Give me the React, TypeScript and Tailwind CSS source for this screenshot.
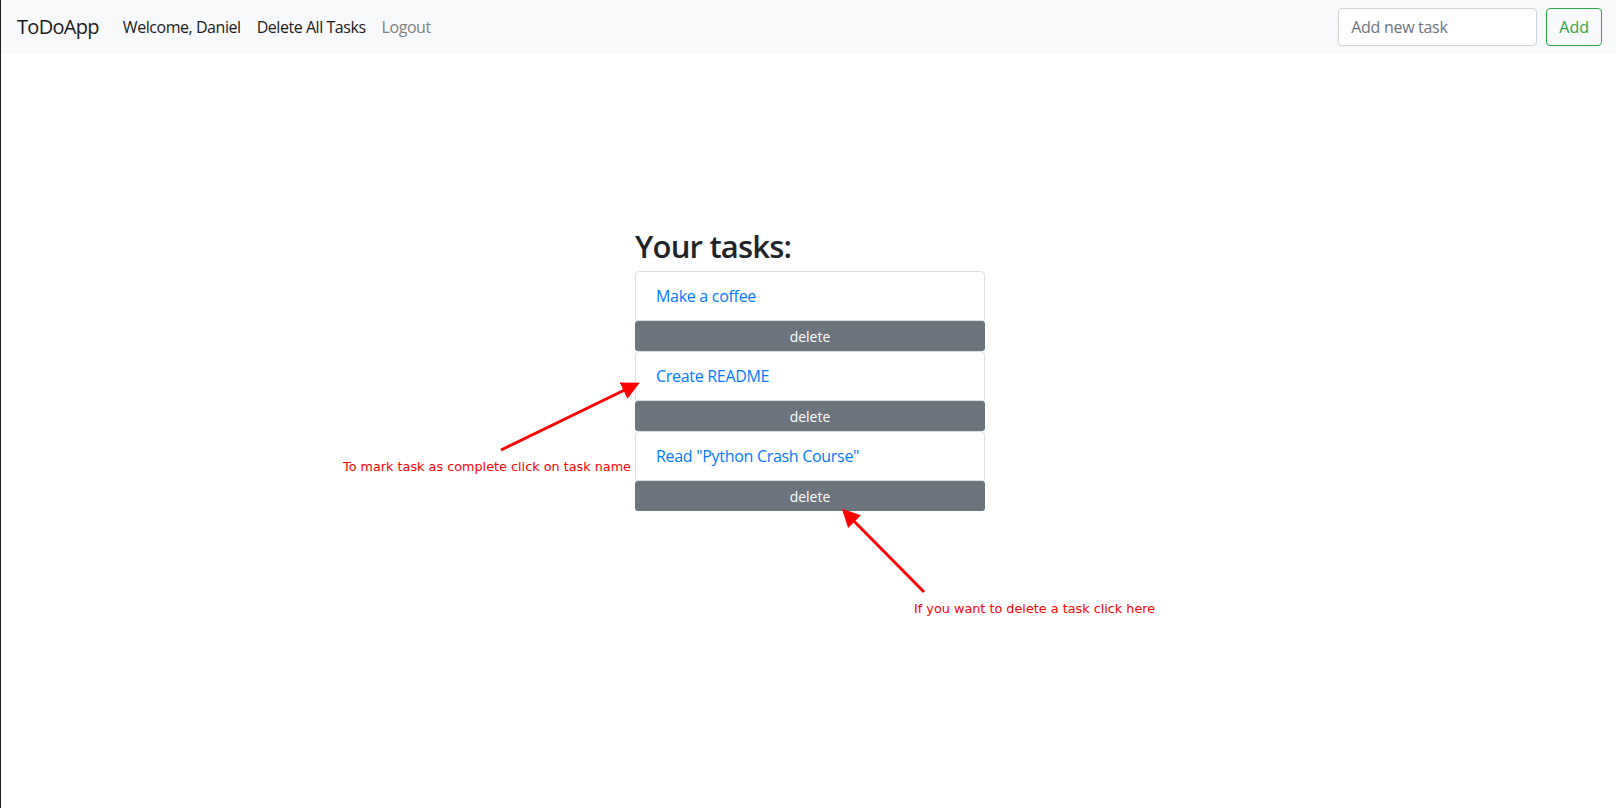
import React from "react";

const tasks = ["Make a coffee", "Create README", 'Read "Python Crash Course"'];

const Navbar = () => {
  return (
    <nav className="flex h-[54px] items-center justify-between bg-[#f8f9fa] pl-4 pr-[14px]">
      <div className="flex items-center tracking-[-0.45px]">
        <a className="mr-4 text-[20px] leading-[30px] tracking-[-0.7px] text-[#1a1a1a]" href="#">
          ToDoApp
        </a>
        <span className="px-2 text-[#1a1a1a]">Welcome, Daniel</span>
        <a className="px-2 text-[#1a1a1a]" href="#">
          Delete All Tasks
        </a>
        <a className="px-2 text-[#808080]" href="#">
          Logout
        </a>
      </div>
      <form className="flex items-center gap-[9px]" onSubmit={(e) => e.preventDefault()}>
        <input
          className="h-[38px] w-[199px] rounded-[4px] border border-[#ced4da] bg-white px-3 text-[16px] tracking-[-0.3px] text-[#495057] placeholder:text-[#6c757d] outline-none"
          placeholder="Add new task"
        />
        <button className="h-[38px] rounded-[4px] border border-[#28a745] px-3 text-[16px] text-[#28a745]">
          Add
        </button>
      </form>
    </nav>
  );
};

const TaskList = () => {
  return (
    <div className="flex justify-center pl-[3px]">
      <div className="mt-[171px] w-[350px]">
        <h2 className="mb-[6px] pt-[2px] text-[31px] font-semibold leading-[38px] tracking-[-0.8px] text-[#212529]">
          Your tasks:
        </h2>
        <div className="flex flex-col">
          {tasks.map((task, i) => (
            <div key={i} className="flex flex-col">
              <div className="rounded-t-[4px] border border-[#dfdfdf] bg-white px-5 py-3">
                <a href="#" className="leading-6 tracking-[-0.3px] text-[#007bff]">
                  {task}
                </a>
              </div>
              <button className="h-[30px] rounded-[3px] bg-[#6c757d] text-[14px] text-white">delete</button>
            </div>
          ))}
        </div>
      </div>
    </div>
  );
};

// red hints drawn on top of the screenshot
const Annotations = () => {
  return (
    <>
      <svg className="pointer-events-none absolute left-0 top-0" width="1616" height="808">
        <defs>
          <marker id="head" markerWidth="6" markerHeight="6" refX="5" refY="3" orient="auto" markerUnits="strokeWidth">
            <path d="M0,0 L6,3 L0,6 z" fill="#ff0000" />
          </marker>
        </defs>
        <line x1="500" y1="450" x2="636" y2="384" stroke="#ff0000" strokeWidth="3" markerEnd="url(#head)" />
        <line x1="923" y1="592" x2="843" y2="511" stroke="#ff0000" strokeWidth="3" markerEnd="url(#head)" />
      </svg>
      <p className="absolute left-[342px] top-[459px] text-[12.8px] leading-4 text-[#ff0000] [font-family:'DejaVu_Sans',sans-serif]">
        To mark task as complete click on task name
      </p>
      <p className="absolute left-[913px] top-[601px] text-[12.8px] leading-4 text-[#ff0000] [font-family:'DejaVu_Sans',sans-serif]">
        If you want to delete a task click here
      </p>
    </>
  );
};

export default function App() {
  return (
    <div className="relative h-[808px] overflow-hidden border-l border-[#1e1e1e] bg-white text-[16px] [font-family:'Open_Sans',sans-serif]">
      <Navbar />
      <TaskList />
      <Annotations />
    </div>
  );
}
